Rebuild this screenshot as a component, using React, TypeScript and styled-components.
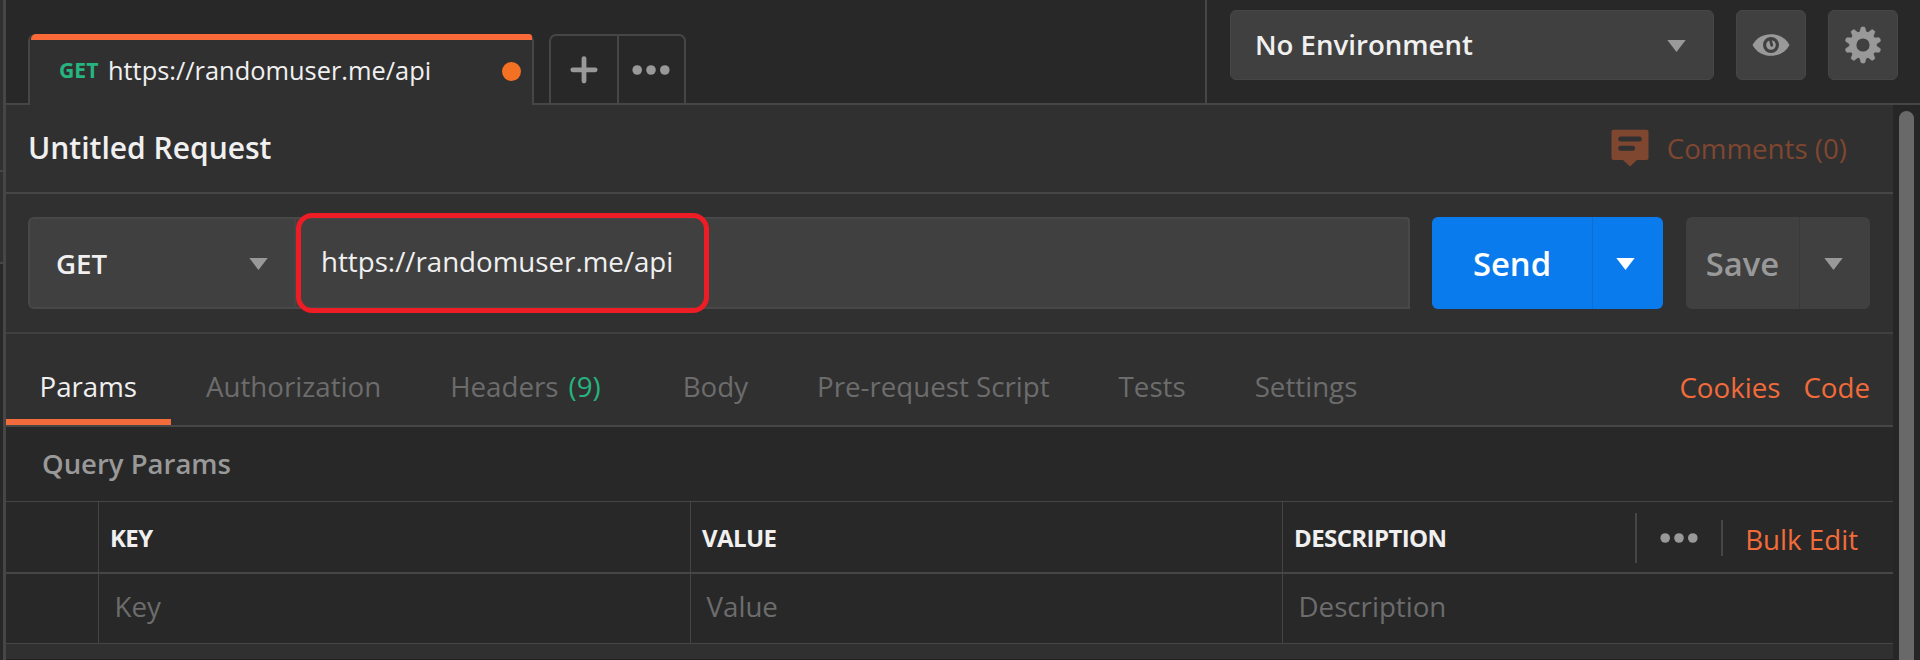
import React from 'react';
import styled, { createGlobalStyle } from 'styled-components';

const c = {
  bg: '#282828',
  panel: '#303030',
  field: '#404040',
  line: '#464646',
  text: '#f0f0f0',
  muted: '#999999',
  faint: '#6c6c6c',
  orange: '#f26b3a',
  green: '#26b47f',
  blue: '#097bed',
};

const GlobalStyle = createGlobalStyle`
  * { box-sizing: border-box; }
  body {
    margin: 0;
    background: ${c.bg};
    color: ${c.text};
    font: 400 27.7px/38px "Open Sans", sans-serif;
    white-space: nowrap;
    overflow: hidden;
  }
`;

const Window = styled.div`
  display: flex;
  width: 1920px;
  height: 660px;
  background: ${c.bg};
`;

const Gutter = styled.div`
  width: 6px;
  flex: none;
  display: flex;
  flex-direction: column;
  border-right: 3px solid ${c.line};
`;

const GutterCell = styled.div<{ $height: number; $tone: string }>`
  height: ${p => p.$height}px;
  background: ${p => p.$tone};
  border-bottom: 2px solid ${c.line};
`;

const Main = styled.div`
  flex: 1;
  min-width: 0;
  display: flex;
  flex-direction: column;
`;

const TopBar = styled.header`
  display: flex;
  align-items: flex-end;
  height: 105px;
  flex: none;
`;

const Rule = styled.div<{ $width?: number }>`
  ${p => (p.$width ? `width: ${p.$width}px; flex: none;` : 'flex: 1;')}
  height: 2px;
  background: ${c.line};
`;

const RequestTab = styled.div`
  width: 506px;
  height: 71px;
  display: flex;
  flex-direction: column;
  background: ${c.panel};
  border: solid ${c.line};
  border-width: 0 2px;
  border-radius: 7px 7px 0 0;
`;

const TabAccent = styled.div`
  height: 6px;
  margin: 0 0 0 1px;
  border-radius: 5px 3px 0 0;
  background: #fa6a39;
`;

const TabBody = styled.div`
  flex: 1;
  display: flex;
  align-items: center;
  padding: 0 8px 6px 29px;
  font-size: 25.4px;
`;

const TabMethod = styled.span`
  width: 49px;
  font-size: 21.2px;
  font-weight: 700;
  color: ${c.green};
`;

const UnsavedDot = styled.i`
  width: 19px;
  height: 19px;
  margin: 3px 3px 0 auto;
  border-radius: 50%;
  background: #f47023;
`;

const TabActions = styled.div`
  display: flex;
  width: 137px;
  height: 71px;
  border: 2px solid ${c.line};
  border-bottom-width: 2px;
  border-radius: 7px 7px 0 0;
`;

const TabAction = styled.button`
  flex: 1;
  display: flex;
  align-items: center;
  justify-content: center;
  padding: 0;
  border: 0;
  background: none;
  & + & { border-left: 2px solid ${c.line}; }
`;

const Environment = styled.div`
  flex: none;
  width: 715px;
  height: 105px;
  display: flex;
  gap: 22px;
  padding: 10px 0 0 23px;
  border: solid ${c.line};
  border-width: 0 0 2px 2px;
`;

const EnvironmentSelect = styled.div`
  width: 484px;
  height: 70px;
  display: flex;
  align-items: center;
  justify-content: space-between;
  padding: 0 27px 2px 24px;
  border: 1px solid #464646;
  border-radius: 6px;
  background: ${c.field};
  font-weight: 600;
  font-size: 27.6px;
  svg { margin-top: 3px; }
`;

const IconButton = styled.button`
  width: 70px;
  height: 70px;
  display: flex;
  align-items: center;
  justify-content: center;
  padding: 0 1px 0 0;
  border: 1px solid #464646;
  border-radius: 6px;
  background: ${c.field};
`;

const Workspace = styled.div`
  flex: 1;
  min-height: 0;
  display: flex;
`;

const Request = styled.main`
  width: 1887px;
  display: flex;
  flex-direction: column;
  background: ${c.panel};
`;

const ScrollTrack = styled.div`
  display: flex;
  width: 27px;
  padding: 6px 6px 0 6px;
  background: #262626;
`;

const ScrollThumb = styled.div`
  width: 15px;
  border-radius: 8px 8px 0 0;
  background: #696969;
`;

const TitleRow = styled.div`
  display: flex;
  align-items: center;
  justify-content: space-between;
  height: 89px;
  padding: 0 46px 2px 22px;
  border-bottom: 2px solid ${c.line};
`;

const Title = styled.h1`
  margin: 0;
  font-size: 30px;
  font-weight: 600;
`;

const Comments = styled.div`
  display: flex;
  align-items: center;
  color: #7f4630;
  gap: 18px;
`;

const RequestRow = styled.div`
  display: flex;
  height: 140px;
  padding: 23px 23px 0 22px;
  border-bottom: 2px solid #3f3f3f;
`;

const AddressBar = styled.div`
  position: relative;
  display: flex;
  width: 1382px;
  height: 92px;
  margin-right: 22px;
  border: 2px solid #484848;
  border-radius: 6px 4px 0 6px;
  background: ${c.field};
`;

const MethodSelect = styled.div`
  width: 266px;
  display: flex;
  align-items: center;
  justify-content: space-between;
  padding: 0 26px 0 26px;
  border-right: 2px solid #454545;
  font-weight: 600;
  svg { margin-top: 2px; }
`;

const UrlField = styled.div`
  flex: 1;
  display: flex;
  align-items: center;
  padding: 0 0 4px 25px;
`;

const Highlight = styled.div`
  position: absolute;
  left: 266px;
  top: -6px;
  width: 413px;
  height: 100px;
  border: 5px solid #ee1c24;
  border-radius: 16px;
`;

const SplitButton = styled.div<{ $primary?: boolean }>`
  display: flex;
  width: ${p => (p.$primary ? 231 : 184)}px;
  height: 92px;
  margin-right: ${p => (p.$primary ? 23 : 0)}px;
  border-radius: 6px;
  background: ${p => (p.$primary ? c.blue : c.field)};
  color: ${p => (p.$primary ? '#ffffff' : c.muted)};
  font-size: 32.8px;
  font-weight: 600;
`;

const SplitLabel = styled.div`
  flex: 1;
  display: flex;
  align-items: center;
  justify-content: center;
  padding-top: 2px;
`;

const SplitCaret = styled.div<{ $primary?: boolean }>`
  width: 71px;
  display: flex;
  align-items: center;
  justify-content: center;
  padding: 2px ${p => (p.$primary ? 6 : 4)}px 0 0;
  border-left: 1px solid ${p => (p.$primary ? '#0d6fd6' : '#393939')};
`;

const SectionTabs = styled.nav`
  display: flex;
  height: 93px;
  padding-right: 23px;
  border-bottom: 2px solid ${c.line};
`;

const SectionTab = styled.div<{ $active?: boolean }>`
  display: flex;
  align-items: center;
  padding: 13px 34.5px 0;
  color: ${p => (p.$active ? c.text : c.faint)};
  ${p => p.$active && `box-shadow: inset 0 -6px #f26b3a; width: 165px;`}
  &:first-child { padding-left: 33.5px; margin-right: 0.5px; }
`;

const HeaderCount = styled.span`
  margin: 0 13px 0 10px;
  color: ${c.green};
`;

const Links = styled.div`
  display: flex;
  align-items: center;
  gap: 23px;
  margin-left: auto;
  padding-top: 15px;
  color: ${c.orange};
`;

const SectionTitle = styled.div`
  display: flex;
  align-items: center;
  height: 74px;
  padding: 0 0 0 36px;
  background: ${c.bg};
  color: ${c.muted};
  font-weight: 600;
  font-size: 27.5px;
`;

const Row = styled.div<{ $head?: boolean }>`
  display: grid;
  grid-template-columns: 92px 592px 592px 1fr;
  height: ${p => (p.$head ? 73 : 70)}px;
  border: solid ${c.line};
  border-width: ${p => (p.$head ? '1px 0 2px' : '0 0 1px')};
  background: ${c.bg};
  ${p => (p.$head ? 'font-size: 24px; font-weight: 700; letter-spacing: -0.6px;' : `color: ${c.faint};`)}
`;

const Cell = styled.div<{ $head?: boolean }>`
  display: flex;
  align-items: center;
  padding: ${p => (p.$head ? '2px 35px 0 11px' : '0 0 5px 15.5px')};
  & + & { border-left: 1px solid ${c.line}; }
`;

const ColumnTools = styled.div`
  display: flex;
  align-items: center;
  height: 50px;
  margin-left: auto;
  padding-left: 23px;
  border-left: 2px solid ${c.line};
`;

const BulkEdit = styled.div`
  display: flex;
  align-items: center;
  height: 36px;
  margin-left: 23px;
  padding: 1px 0 0 22px;
  border-left: 2px solid ${c.line};
  color: ${c.orange};
  font-size: 27.7px;
  font-weight: 400;
  letter-spacing: 0;
`;

const Footer = styled.div`
  flex: 1;
  border-bottom: 1px solid #231f20;
`;

const Caret = ({ fill = c.muted }: { fill?: string }) => (
  <svg width="19" height="12" viewBox="0 0 19 12"><path d="M.3 0H18.7L9.5 12Z" fill={fill} /></svg>
);

const Dots = () => (
  <svg width="38" height="12" viewBox="0 0 38 12" fill={c.muted}>
    <circle cx="5.2" cy="6" r="4.8" /><circle cx="19" cy="6" r="4.8" /><circle cx="32.8" cy="6" r="4.8" />
  </svg>
);

const Plus = () => (
  <svg width="28" height="28" viewBox="0 0 28 28" stroke={c.muted} strokeWidth="4.800" strokeLinecap="round">
    <path d="M14 2.600V25M2.800 13.800H25.200" />
  </svg>
);

const Eye = () => (
  <svg width="38" height="24" viewBox="0 0 38 24">
    <path d="M.5 12C4.500 4.500 11.500 1.200 19 1.200S33.500 4.500 37.500 12C33.500 19.500 26.500 22.800 19 22.800S4.500 19.500 .5 12Z" fill={c.muted} />
    <circle cx="19" cy="12" r="6.400" fill={c.muted} stroke={c.field} strokeWidth="3.200" />
    <path d="M19.800 12.400L18.200 6" stroke={c.field} strokeWidth="2.800" strokeLinecap="round" />
  </svg>
);

const Gear = () => (
  <svg width="38" height="38" viewBox="-19 -19 38 38" fill="none" stroke={c.muted}>
    <circle r="10.200" strokeWidth="7.200" />
    {Array.from({ length: 10 }, (_, i) => (
      <path key={i} d="M-3.400-12L-2-17.200Q-1.800-18-1-18H1Q1.800-18 2-17.200L3.400-12Z" fill={c.muted} strokeWidth=".6" transform={`rotate(${i * 36})`} />
    ))}
  </svg>
);

const CommentIcon = () => (
  <svg width="38" height="38" viewBox="0 0 38 38">
    <path d="M2.500 .8H35.500Q37.500 .8 37.500 2.800V29Q37.500 31 35.500 31H26L19 37.500L12 31H2.500Q.5 31 .5 29V2.800Q.5 .8 2.500 .8Z" fill="#7f4630" />
    <path d="M9.800 10H28.200M9.800 19.300H21.500" stroke={c.panel} strokeWidth="5" strokeLinecap="round" />
  </svg>
);

const sections = ['Params', 'Authorization', 'Headers', 'Body', 'Pre-request Script', 'Tests', 'Settings'];

export default function App() {
  return (
    <Window>
      <GlobalStyle />
      <Gutter>
        <GutterCell $height={172} $tone={c.panel} />
        <GutterCell $height={92} $tone={c.panel} />
      </Gutter>
      <Main>
        <TopBar>
          <Rule $width={22} />
          <RequestTab>
            <TabAccent />
            <TabBody>
              <TabMethod>GET</TabMethod>
              https://randomuser.me/api
              <UnsavedDot />
            </TabBody>
          </RequestTab>
          <Rule $width={15} />
          <TabActions>
            <TabAction><Plus /></TabAction>
            <TabAction><Dots /></TabAction>
          </TabActions>
          <Rule />
          <Environment>
            <EnvironmentSelect>No Environment <Caret /></EnvironmentSelect>
            <IconButton><Eye /></IconButton>
            <IconButton><Gear /></IconButton>
          </Environment>
        </TopBar>
        <Workspace>
          <Request>
            <TitleRow>
              <Title>Untitled Request</Title>
              <Comments><CommentIcon />Comments (0)</Comments>
            </TitleRow>
            <RequestRow>
              <AddressBar>
                <MethodSelect>GET <Caret /></MethodSelect>
                <UrlField>https://randomuser.me/api</UrlField>
                <Highlight />
              </AddressBar>
              <SplitButton $primary>
                <SplitLabel>Send</SplitLabel>
                <SplitCaret $primary><Caret fill="#ffffff" /></SplitCaret>
              </SplitButton>
              <SplitButton>
                <SplitLabel>Save</SplitLabel>
                <SplitCaret><Caret /></SplitCaret>
              </SplitButton>
            </RequestRow>
            <SectionTabs>
              {sections.map((name, i) => (
                <SectionTab key={name} $active={i === 0}>
                  {name}
                  {name === 'Headers' && <HeaderCount>(9)</HeaderCount>}
                </SectionTab>
              ))}
              <Links><span>Cookies</span><span>Code</span></Links>
            </SectionTabs>
            <SectionTitle>Query Params</SectionTitle>
            <Row $head>
              <Cell $head />
              <Cell $head>KEY</Cell>
              <Cell $head>VALUE</Cell>
              <Cell $head>
                DESCRIPTION
                <ColumnTools><Dots /><BulkEdit>Bulk Edit</BulkEdit></ColumnTools>
              </Cell>
            </Row>
            <Row>
              <Cell />
              <Cell>Key</Cell>
              <Cell>Value</Cell>
              <Cell>Description</Cell>
            </Row>
            <Footer />
          </Request>
          <ScrollTrack><ScrollThumb /></ScrollTrack>
        </Workspace>
      </Main>
    </Window>
  );
}
